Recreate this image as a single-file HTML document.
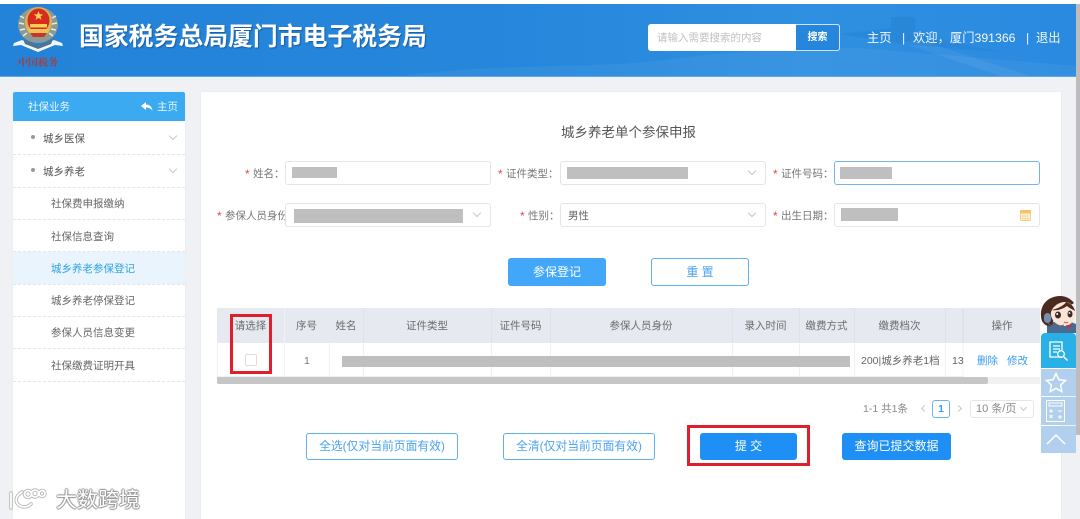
<!DOCTYPE html>
<html lang="zh">
<head>
<meta charset="utf-8">
<title>城乡养老单个参保申报</title>
<style>
*{box-sizing:border-box;margin:0;padding:0}
html{width:1080px;height:519px;overflow:hidden;background:#eff1f4}
body{position:relative;width:1080px;height:519px;overflow:hidden;background:#eff1f4;font-family:"Liberation Sans","Noto Sans CJK SC",sans-serif;font-size:10.5px;color:#666;filter:blur(.3px)}
.a{position:absolute;white-space:nowrap;line-height:14px}
.box{position:absolute;background:#fff;border:1px solid #e3e5e8;border-radius:3px}
.g{position:absolute;background:#bfbfbf}
.l{position:absolute;white-space:nowrap;line-height:14px;color:#777}
.l i{font-style:normal;color:#ed3f4b;position:absolute;left:-8px;font-size:12px}
.dash{position:absolute;left:13px;width:172px;border-top:1px dashed #e2e4e7}
.sub{position:absolute;left:51px;line-height:14px;color:#666;white-space:nowrap}
.th{position:absolute;top:319px;text-align:center;line-height:14px;color:#6c6c6c;white-space:nowrap}
.v{position:absolute;width:1px;background:#eef0f3}
.btn{position:absolute;border-radius:3px;text-align:center;white-space:nowrap}
.pri{background:#1e90f5;color:#fff}
.out{background:#fff;border:1px solid #5fb0f2;color:#4ba3ee}
.chev{position:absolute;width:6px;height:6px;border-right:1px solid #c8c8c8;border-bottom:1px solid #c8c8c8;transform:rotate(45deg)}
.red{position:absolute;border:3px solid #e01f2d}
</style>
</head>
<body>
<div style="position:absolute;left:0;top:0;width:1080px;height:4px;background:#fff"></div>

<!-- header -->
<div style="position:absolute;left:0;top:4px;width:1076px;height:73px;background:linear-gradient(90deg,#2383d8 0%,#2586db 45%,#2f8fe0 75%,#2a8ae0 100%);border-bottom:1px solid #5aa8e8;overflow:hidden">
<svg width="1076" height="72" style="position:absolute;left:0;top:0">
<path d="M400 72 C500 58 600 66 680 54 C720 48 800 44 860 44 L1076 62 L1076 72Z" fill="#fff" opacity=".05"/>
<path d="M920 36 L1030 72 L1000 72 L900 38Z" fill="#fff" opacity=".06"/>
<path d="M840 30 L891 24 L891 13 L915 13 L915 30 L1000 48 L900 40Z" fill="#1b6fb8" opacity=".18"/>
</svg>
</div>

<!-- emblem -->
<svg width="70" height="56" viewBox="0 0 70 56" style="position:absolute;left:0;top:0">
<ellipse cx="38" cy="25" rx="20" ry="18" fill="#8e9a90"/>
<path d="M20 16l4 2M19 23l5 1M20 30l5-1M23 36l4-3M56 16l-4 2M57 23l-5 1M56 30l-5-1M53 36l-4-3" stroke="#e8ece8" stroke-width="1.500"/>
<ellipse cx="38.500" cy="22" rx="13.500" ry="15" fill="#d7b355"/>
<ellipse cx="38.500" cy="20.500" rx="11" ry="12" fill="#d92a20"/>
<path d="M38.500 11l1.300 3.400h3.500l-2.800 2.100 1 3.400-3-2-3 2 1-3.400-2.800-2.100h3.500z" fill="#f5d34f"/>
<path d="M30 24h17v3.500H30z" fill="#f4ce55"/>
<path d="M27 29h23l-3 5H30z" fill="#e9c25b"/>
<path d="M30 33h17l-3 4H33z" fill="#c9352a"/>
<path d="M38 47L22 40 14 43 13 46 21 45 38 52 55 45 63 46 62 43 54 40z" fill="#f3f6f8"/>
<path d="M23 39l15 7 15-7-2 5-13 5-13-5z" fill="#54728c"/>
</svg>
<div class="a" style="left:18px;top:55px;font-size:10px;line-height:13px;color:#a83c3c;font-weight:bold;font-family:'Noto Serif CJK SC',serif;letter-spacing:0">中国税务</div>

<div class="a" style="left:79px;top:24px;font-size:24.850px;line-height:28px;font-weight:700;color:#fff;text-shadow:1px 1px 1px rgba(20,60,110,.55)">国家税务总局厦门市电子税务局</div>

<!-- search -->
<div style="position:absolute;left:648px;top:24px;width:192px;height:27px;background:#fff;border-radius:3px"></div>
<div class="a" style="left:657px;top:31px;color:#c0c0c0;font-size:10.500px">请输入需要搜索的内容</div>
<div style="position:absolute;left:796px;top:24px;width:44px;height:27px;background:#2586db;border:1px solid #cfe4f7;border-left:none;border-radius:0 3px 3px 0;text-align:center;color:#fff;font-size:10px;font-weight:bold;line-height:26px">搜索</div>
<div class="a" style="left:867px;top:31px;color:#f3f8fd;font-size:12.300px">主页</div>
<div class="a" style="left:902px;top:31px;color:#f3f8fd;font-size:12.300px">|</div>
<div class="a" style="left:913px;top:31px;color:#f3f8fd;font-size:12.300px">欢迎，厦门391366</div>
<div class="a" style="left:1026px;top:31px;color:#f3f8fd;font-size:12.300px">|</div>
<div class="a" style="left:1036px;top:31px;color:#f3f8fd;font-size:12.300px">退出</div>

<!-- page scrollbar -->
<div style="position:absolute;left:1076px;top:4px;width:4px;height:431px;background:#bdbdbd"></div>

<!-- sidebar -->
<div style="position:absolute;left:13px;top:92px;width:172px;height:427px;background:#fff;box-shadow:0 0 1px #dfe1e4"></div>
<div style="position:absolute;left:13px;top:92px;width:172px;height:29px;background:#3baaf0;border-radius:2px 2px 0 0"></div>
<div class="a" style="left:28px;top:100px;color:#eaf6fe;font-size:10.500px">社保业务</div>
<svg width="12" height="10" viewBox="0 0 12 10" style="position:absolute;left:141px;top:102px"><path d="M5 0L0 4l5 4V5.500c3 0 5 1 6.500 3.500C11 5 9 2.500 5 2.500z" fill="#fff"/></svg>
<div class="a" style="left:157px;top:100px;color:#eaf6fe;font-size:10.500px">主页</div>

<div style="position:absolute;left:13px;top:252px;width:172px;height:32px;background:#e9f4fc"></div>
<div class="dash" style="top:154px"></div>
<div class="dash" style="top:187px"></div>
<div class="dash" style="top:219px"></div>
<div class="dash" style="top:251px"></div>
<div class="dash" style="top:284px"></div>
<div class="dash" style="top:316px"></div>
<div class="dash" style="top:348px"></div>
<div class="dash" style="top:381px"></div>

<div style="position:absolute;left:31px;top:135px;width:4px;height:4px;border-radius:50%;background:#999"></div>
<div style="position:absolute;left:31px;top:168px;width:4px;height:4px;border-radius:50%;background:#999"></div>
<div class="a" style="left:43px;top:132px;color:#555">城乡医保</div>
<div class="a" style="left:43px;top:165px;color:#555">城乡养老</div>
<div class="chev" style="left:170px;top:133px"></div>
<div class="chev" style="left:170px;top:166px"></div>
<div class="sub" style="top:197px">社保费申报缴纳</div>
<div class="sub" style="top:230px">社保信息查询</div>
<div class="sub" style="top:262px;color:#2fa3e6">城乡养老参保登记</div>
<div class="sub" style="top:294px">城乡养老停保登记</div>
<div class="sub" style="top:326px">参保人员信息变更</div>
<div class="sub" style="top:359px">社保缴费证明开具</div>

<!-- main panel -->
<div style="position:absolute;left:201px;top:92px;width:860px;height:427px;background:#fff;box-shadow:0 0 1px #dcdee2"></div>
<div class="a" style="left:561px;top:125px;font-size:13.500px;line-height:16px;color:#555">城乡养老单个参保申报</div>

<!-- form row 1 -->
<div class="l" style="left:253px;top:167px"><i>*</i>姓名：</div>
<div class="box" style="left:285px;top:161px;width:206px;height:24px"></div>
<div class="g" style="left:292px;top:167px;width:45px;height:11px"></div>
<div class="l" style="left:506px;top:167px"><i>*</i>证件类型：</div>
<div class="box" style="left:560px;top:161px;width:206px;height:24px"></div>
<div class="g" style="left:567px;top:167px;width:121px;height:12px"></div>
<div class="chev" style="left:749px;top:168px"></div>
<div class="l" style="left:781px;top:167px"><i>*</i>证件号码：</div>
<div class="box" style="left:834px;top:161px;width:206px;height:24px;border-color:#71b5ee"></div>
<div class="g" style="left:840px;top:167px;width:52px;height:12px"></div>

<!-- form row 2 -->
<div class="l" style="left:225px;top:209px;width:60px;overflow:visible"><i>*</i><span style="display:block;width:60px;overflow:hidden">参保人员身份</span></div>
<div class="box" style="left:285px;top:203px;width:206px;height:24px"></div>
<div class="g" style="left:294px;top:209px;width:169px;height:14px"></div>
<div class="chev" style="left:474px;top:210px"></div>
<div class="l" style="left:528px;top:209px"><i>*</i>性别：</div>
<div class="box" style="left:560px;top:203px;width:206px;height:24px"></div>
<div class="a" style="left:568px;top:209px;color:#666">男性</div>
<div class="chev" style="left:749px;top:210px"></div>
<div class="l" style="left:781px;top:209px"><i>*</i>出生日期：</div>
<div class="box" style="left:834px;top:203px;width:206px;height:24px"></div>
<div class="g" style="left:841px;top:208px;width:57px;height:13px"></div>
<svg width="11" height="11" viewBox="0 0 11 11" style="position:absolute;left:1020px;top:210px"><rect x=".5" y=".5" width="10" height="10" rx="1" fill="#fdf0d4" stroke="#f4cf85"/><rect x="0" y="0" width="11" height="3.500" fill="#f3c369"/><path d="M2 6h7M2 8.500h7" stroke="#f3c369" stroke-dasharray="1.500 1"/></svg>

<!-- form buttons -->
<div class="btn" style="left:508px;top:258px;width:98px;height:28px;background:#42a7f8;color:#fff;font-size:12px;line-height:28px">参保登记</div>
<div class="btn out" style="left:651px;top:258px;width:98px;height:28px;font-size:12px;line-height:26px">重 置</div>

<!-- table -->
<div style="position:absolute;left:217px;top:308px;width:823px;height:35px;background:#e6eaf0"></div>
<div style="position:absolute;left:217px;top:343px;width:823px;height:34px;background:#fff;border-left:1px solid #eef0f3;border-bottom:1px solid #eef0f3"></div>
<div class="v" style="left:284px;top:308px;height:69px;background:#f0f2f5"></div>
<div class="v" style="left:329px;top:343px;height:34px"></div>
<div class="v" style="left:363px;top:308px;height:35px;background:#dfe3e9"></div>
<div class="v" style="left:491px;top:308px;height:35px;background:#dfe3e9"></div>
<div class="v" style="left:550px;top:308px;height:35px;background:#dfe3e9"></div>
<div class="v" style="left:732px;top:308px;height:35px;background:#dfe3e9"></div>
<div class="v" style="left:799px;top:308px;height:35px;background:#dfe3e9"></div>
<div class="v" style="left:854px;top:308px;height:35px;background:#dfe3e9"></div>
<div class="v" style="left:945px;top:308px;height:35px;background:#dfe3e9"></div>
<div class="v" style="left:363px;top:343px;height:34px"></div>
<div class="v" style="left:491px;top:343px;height:34px"></div>
<div class="v" style="left:550px;top:343px;height:34px"></div>
<div class="v" style="left:732px;top:343px;height:34px"></div>
<div class="v" style="left:799px;top:343px;height:34px"></div>
<div class="v" style="left:854px;top:343px;height:34px"></div>
<div class="v" style="left:945px;top:343px;height:34px"></div>

<div class="th" style="left:217px;width:67px">请选择</div>
<div class="th" style="left:284px;width:45px">序号</div>
<div class="th" style="left:329px;width:34px">姓名</div>
<div class="th" style="left:363px;width:128px">证件类型</div>
<div class="th" style="left:491px;width:59px">证件号码</div>
<div class="th" style="left:550px;width:182px">参保人员身份</div>
<div class="th" style="left:732px;width:67px">录入时间</div>
<div class="th" style="left:799px;width:55px">缴费方式</div>
<div class="th" style="left:854px;width:91px">缴费档次</div>

<div style="position:absolute;left:245px;top:354px;width:12px;height:12px;border:1px solid #ddd;border-radius:2px;background:#fff"></div>
<div class="a" style="left:304px;top:354px;color:#777">1</div>
<div class="g" style="left:342px;top:356px;width:508px;height:11px"></div>
<div class="a" style="left:861px;top:354px;color:#666">200|城乡养老1档</div>
<div class="a" style="left:952px;top:354px;width:12px;overflow:hidden;color:#666">13</div>

<!-- fixed column -->
<div style="position:absolute;left:964px;top:308px;width:76px;height:69px;background:#fff;box-shadow:-1px 0 2px rgba(0,0,0,.05)"></div>
<div style="position:absolute;left:964px;top:308px;width:76px;height:35px;background:#e6eaf0"></div>
<div class="th" style="left:964px;width:76px">操作</div>
<div class="a" style="left:977px;top:354px;color:#3a9bf0">删除</div>
<div class="a" style="left:1007px;top:354px;color:#3a9bf0">修改</div>

<!-- table scrollbar -->
<div style="position:absolute;left:217px;top:377px;width:823px;height:7px;background:#f1f1f1"></div>
<div style="position:absolute;left:217px;top:377px;width:771px;height:7px;background:#c6c6c6;border-radius:0 2px 2px 2px"></div>

<!-- pagination -->
<div class="a" style="left:863px;top:402px;color:#888">1-1 共1条</div>
<div class="chev" style="left:922px;top:406px;width:5px;height:5px;transform:rotate(135deg)"></div>
<div style="position:absolute;left:932px;top:400px;width:18px;height:18px;border:1px solid #6db4ef;border-radius:3px;text-align:center;line-height:16px;color:#3a9bf0;font-weight:bold;font-size:10.500px">1</div>
<div class="chev" style="left:956px;top:406px;width:5px;height:5px;transform:rotate(-45deg)"></div>
<div style="position:absolute;left:970px;top:400px;width:64px;height:18px;border:1px solid #e3e5e8;border-radius:3px"></div>
<div class="a" style="left:976px;top:402px;color:#888;font-size:11px">10 条/页</div>
<div class="chev" style="left:1021px;top:405px;width:5px;height:5px"></div>

<!-- bottom buttons -->
<div class="btn out" style="left:306px;top:433px;width:152px;height:27px;font-size:11.800px;line-height:25px">全选(仅对当前页面有效)</div>
<div class="btn out" style="left:503px;top:433px;width:152px;height:27px;font-size:11.800px;line-height:25px">全清(仅对当前页面有效)</div>
<div class="btn pri" style="left:700px;top:433px;width:97px;height:27px;font-size:12px;line-height:27px">提 交</div>
<div class="btn pri" style="left:842px;top:433px;width:109px;height:27px;font-size:12px;line-height:27px">查询已提交数据</div>

<!-- red annotations -->
<div class="red" style="left:230px;top:314px;width:42px;height:60px"></div>
<div class="red" style="left:687px;top:425px;width:123px;height:41px"></div>

<!-- floating bar -->
<svg width="44" height="42" viewBox="0 0 44 42" style="position:absolute;left:1036px;top:292px">
<path d="M11 33l6-3h18l5 2v9H11z" fill="#4a6a92"/>
<path d="M5 24C4 12 13 4 24 4c6 0 11 3 14 7l-6 4-12 3-4 16c-6 1-11-3-11-10z" fill="#4b2b1f"/>
<path d="M15 20c2-6 8-10 14-10 6 0 10 5 10 12 0 7-5 12-11 12-8 0-14-7-13-14z" fill="#fce4d4"/>
<path d="M16 18c4-1 12-4 14-8 4 1 8 4 9 9-3-2-6-3-8-5-4 3-10 5-15 4z" fill="#4b2b1f"/>
<ellipse cx="22" cy="23" rx="3" ry="3.500" fill="#3a2a26"/><circle cx="21.200" cy="22" r="1" fill="#fff"/>
<ellipse cx="34" cy="22" rx="2.500" ry="3.500" fill="#3a2a26"/><circle cx="33.400" cy="21" r=".9" fill="#fff"/>
<path d="M28 30c1 1 3 1 4 0" stroke="#c0504d" fill="none"/>
<rect x="8" y="21" width="7" height="10" rx="3.500" fill="#7390b2"/>
<path d="M12 31c3 4 9 4 16 2" fill="none" stroke="#667" stroke-width="1"/>
<path d="M30 33l3 4 3-4z" fill="#c8303a"/>
</svg>
<div style="position:absolute;left:1041px;top:333px;width:35px;height:35px;background:#29b1e7;border-radius:4px 4px 0 0"></div>
<svg width="22" height="24" viewBox="0 0 22 24" style="position:absolute;left:1049px;top:341px" fill="none" stroke="#fff" stroke-width="1.300"><path d="M13 16H1V1h12v8"/><path d="M4 5h7M4 8h7M4 11h4"/><circle cx="12" cy="13" r="3.300"/><path d="M14.500 15.500l4 4"/></svg>
<div style="position:absolute;left:1041px;top:369px;width:35px;height:27px;background:#b2cfee"></div>
<svg width="22" height="22" viewBox="0 0 22 22" style="position:absolute;left:1045px;top:372px"><path d="M11 1.500l2.900 6.200 6.600.8-4.900 4.500 1.300 6.600L11 16.300l-5.900 3.300 1.300-6.600L1.500 8.500l6.600-.8z" fill="none" stroke="#fff" stroke-width="1.500"/></svg>
<div style="position:absolute;left:1041px;top:397px;width:35px;height:28px;background:#b2cfee"></div>
<svg width="20" height="23" viewBox="0 0 20 23" style="position:absolute;left:1046px;top:400px" fill="none" stroke="#fff" stroke-width="1"><rect x=".5" y=".5" width="18" height="21"/><rect x="3" y="3" width="13" height="3"/><path d="M3 11h4M5 9v4M12 11h4M3.500 15l3 3M6.500 15l-3 3M12 17h4M14 15v4"/></svg>
<div style="position:absolute;left:1041px;top:426px;width:35px;height:27px;background:#b2cfee"></div>
<svg width="20" height="12" viewBox="0 0 20 12" style="position:absolute;left:1046px;top:433px"><path d="M1 11L10 2l9 9" fill="none" stroke="#fff" stroke-width="1.500"/></svg>

<!-- watermark -->
<svg width="44" height="24" viewBox="0 0 44 24" style="position:absolute;left:8px;top:488px" fill="none" stroke-linecap="round">
<g stroke="#b5b5b5" stroke-width="3.500"><path d="M3 5v15M14 4c-5 3-7 7-5 11 3 5 10 5 14 1"/><circle cx="20" cy="6" r="3.500"/><circle cx="27" cy="5.500" r="3.500"/><circle cx="34" cy="5.500" r="3"/></g>
<g stroke="#fff" stroke-width="1.800"><path d="M3 5v15M14 4c-5 3-7 7-5 11 3 5 10 5 14 1"/><circle cx="20" cy="6" r="3.500"/><circle cx="27" cy="5.500" r="3.500"/><circle cx="34" cy="5.500" r="3"/></g>
</svg>
<div class="a" style="left:56px;top:489px;font-size:21px;line-height:24px;color:#fff;text-shadow:0 0 1px #777,1px 0 1px #999,-1px 0 1px #999,0 1px 1px #999,0 -1px 1px #999">大数跨境</div>
</body>
</html>
